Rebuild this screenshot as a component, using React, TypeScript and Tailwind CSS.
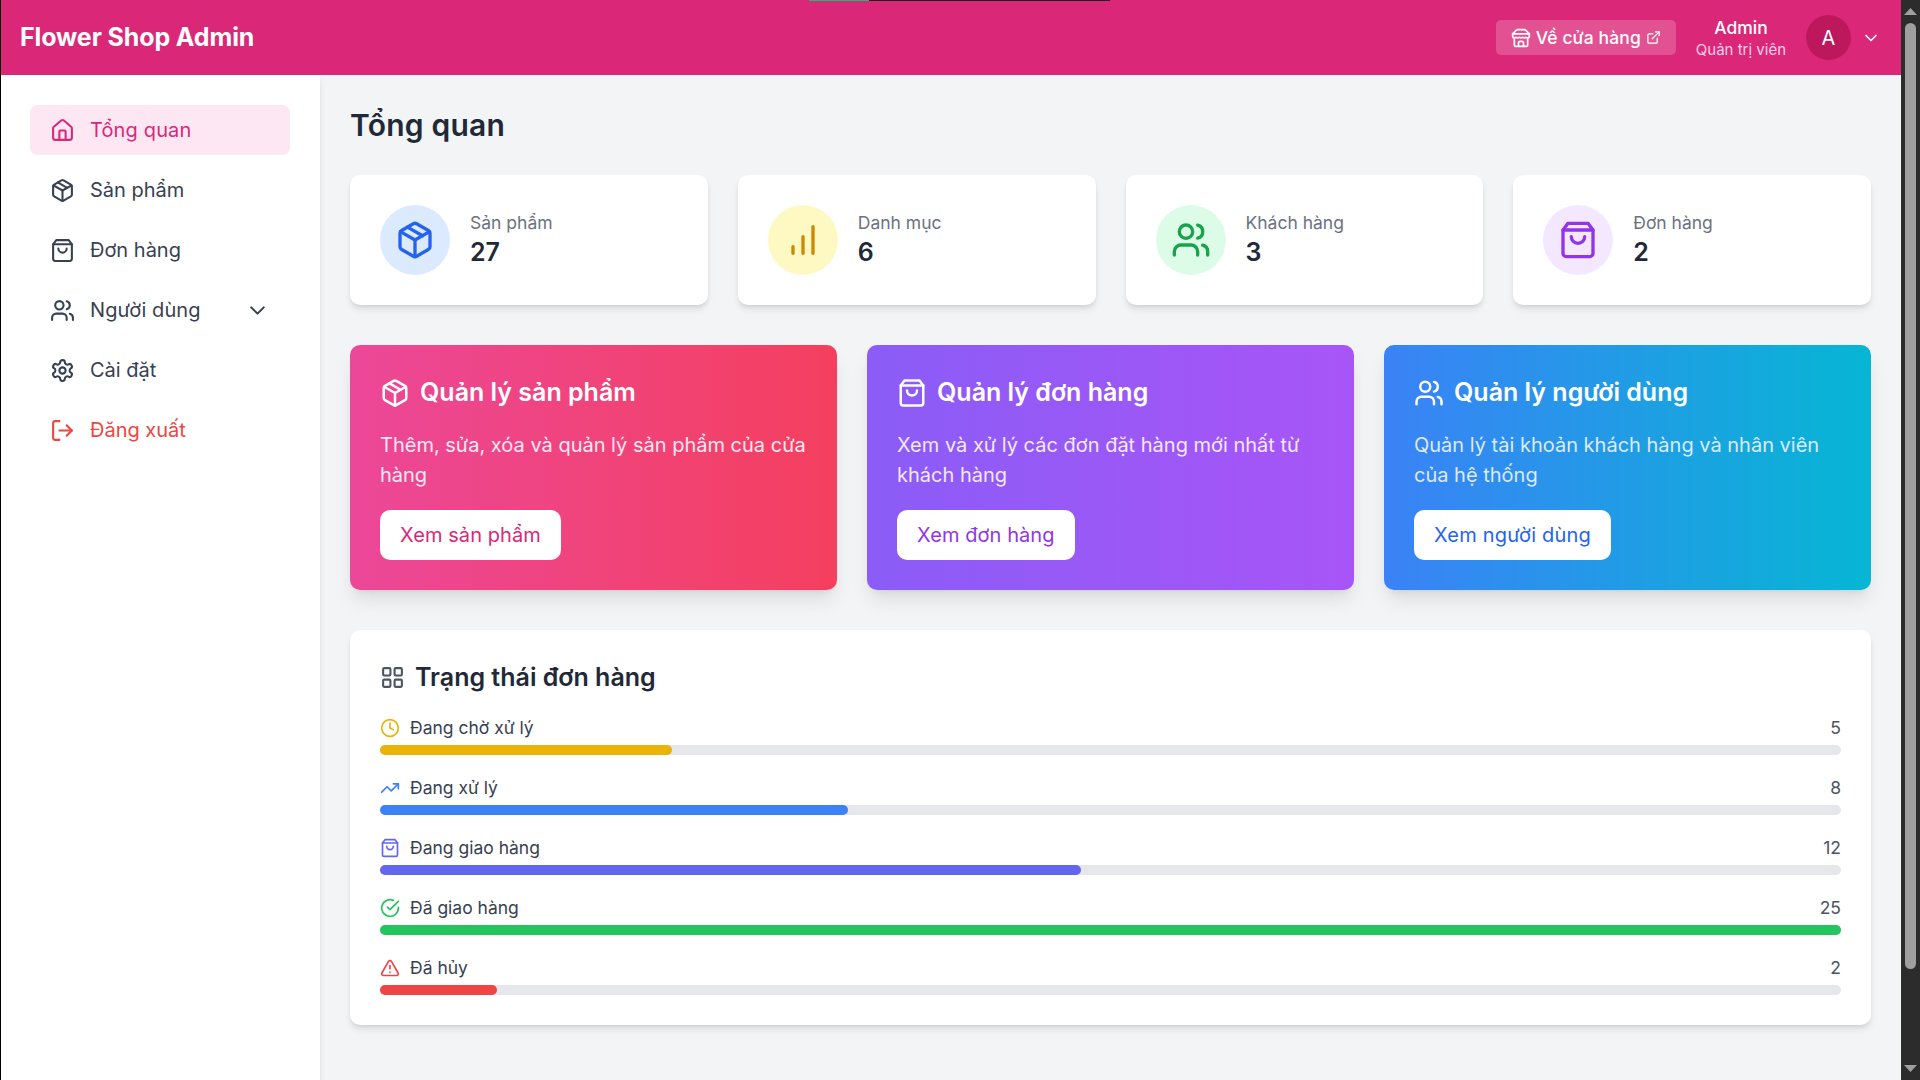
import type { ReactNode } from "react";

type IconProps = { className?: string };

function Icon({ className = "", children }: IconProps & { children: ReactNode }) {
  return (
    <svg
      viewBox="0 0 24 24"
      fill="none"
      stroke="currentColor"
      strokeWidth={2}
      strokeLinecap="round"
      strokeLinejoin="round"
      className={`shrink-0 ${className}`}
    >
      {children}
    </svg>
  );
}

const HomeIcon = (p: IconProps) => (
  <Icon {...p}>
    <path d="M15 21v-8a1 1 0 0 0-1-1h-4a1 1 0 0 0-1 1v8" />
    <path d="M3 10a2 2 0 0 1 .709-1.528l7-5.999a2 2 0 0 1 2.582 0l7 5.999A2 2 0 0 1 21 10v9a2 2 0 0 1-2 2H5a2 2 0 0 1-2-2z" />
  </Icon>
);

const PackageIcon = (p: IconProps) => (
  <Icon {...p}>
    <path d="m7.5 4.27 9 5.15" />
    <path d="M21 8a2 2 0 0 0-1-1.73l-7-4a2 2 0 0 0-2 0l-7 4A2 2 0 0 0 3 8v8a2 2 0 0 0 1 1.73l7 4a2 2 0 0 0 2 0l7-4A2 2 0 0 0 21 16Z" />
    <path d="m3.3 7 8.7 5 8.7-5" />
    <path d="M12 22V12" />
  </Icon>
);

const BagIcon = (p: IconProps) => (
  <Icon {...p}>
    <path d="M6 2 3 6v14a2 2 0 0 0 2 2h14a2 2 0 0 0 2-2V6l-3-4Z" />
    <path d="M3 6h18" />
    <path d="M16 10a4 4 0 0 1-8 0" />
  </Icon>
);

const UsersIcon = (p: IconProps) => (
  <Icon {...p}>
    <path d="M16 21v-2a4 4 0 0 0-4-4H6a4 4 0 0 0-4 4v2" />
    <circle cx="9" cy="7" r="4" />
    <path d="M22 21v-2a4 4 0 0 0-3-3.87" />
    <path d="M16 3.13a4 4 0 0 1 0 7.75" />
  </Icon>
);

const SettingsIcon = (p: IconProps) => (
  <Icon {...p}>
    <path d="M12.22 2h-.44a2 2 0 0 0-2 2v.18a2 2 0 0 1-1 1.73l-.43.25a2 2 0 0 1-2 0l-.15-.08a2 2 0 0 0-2.73.73l-.22.38a2 2 0 0 0 .73 2.73l.15.1a2 2 0 0 1 1 1.72v.51a2 2 0 0 1-1 1.74l-.15.09a2 2 0 0 0-.73 2.73l.22.38a2 2 0 0 0 2.73.73l.15-.08a2 2 0 0 1 2 0l.43.25a2 2 0 0 1 1 1.73V20a2 2 0 0 0 2 2h.44a2 2 0 0 0 2-2v-.18a2 2 0 0 1 1-1.73l.43-.25a2 2 0 0 1 2 0l.15.08a2 2 0 0 0 2.73-.73l.22-.39a2 2 0 0 0-.73-2.73l-.15-.08a2 2 0 0 1-1-1.74v-.5a2 2 0 0 1 1-1.74l.15-.09a2 2 0 0 0 .73-2.73l-.22-.38a2 2 0 0 0-2.73-.73l-.15.08a2 2 0 0 1-2 0l-.43-.25a2 2 0 0 1-1-1.73V4a2 2 0 0 0-2-2z" />
    <circle cx="12" cy="12" r="3" />
  </Icon>
);

const LogoutIcon = (p: IconProps) => (
  <Icon {...p}>
    <path d="M9 21H5a2 2 0 0 1-2-2V5a2 2 0 0 1 2-2h4" />
    <path d="m16 17 5-5-5-5" />
    <path d="M21 12H9" />
  </Icon>
);

const ChevronIcon = (p: IconProps) => (
  <Icon {...p}>
    <path d="m6 9 6 6 6-6" />
  </Icon>
);

const StoreIcon = (p: IconProps) => (
  <Icon {...p}>
    <path d="m2 7 4.41-4.41A2 2 0 0 1 7.83 2h8.34a2 2 0 0 1 1.42.59L22 7" />
    <path d="M4 12v8a2 2 0 0 0 2 2h12a2 2 0 0 0 2-2v-8" />
    <path d="M15 22v-4a2 2 0 0 0-2-2h-2a2 2 0 0 0-2 2v4" />
    <path d="M2 7h20" />
    <path d="M22 7v3a2 2 0 0 1-2 2a2.7 2.7 0 0 1-1.59-.63.7.7 0 0 0-.82 0A2.7 2.7 0 0 1 16 12a2.7 2.7 0 0 1-1.59-.63.7.7 0 0 0-.82 0A2.7 2.7 0 0 1 12 12a2.7 2.7 0 0 1-1.59-.63.7.7 0 0 0-.82 0A2.7 2.7 0 0 1 8 12a2.7 2.7 0 0 1-1.59-.63.7.7 0 0 0-.82 0A2.7 2.7 0 0 1 4 12a2 2 0 0 1-2-2V7" />
  </Icon>
);

const ExternalIcon = (p: IconProps) => (
  <Icon {...p}>
    <path d="M15 3h6v6" />
    <path d="M10 14 21 3" />
    <path d="M18 13v6a2 2 0 0 1-2 2H5a2 2 0 0 1-2-2V8a2 2 0 0 1 2-2h6" />
  </Icon>
);

const ChartIcon = (p: IconProps) => (
  <Icon {...p}>
    <path d="M12 20V10" />
    <path d="M18 20V4" />
    <path d="M6 20v-4" />
  </Icon>
);

const GridIcon = (p: IconProps) => (
  <Icon {...p}>
    <rect width="7" height="7" x="3" y="3" rx="1" />
    <rect width="7" height="7" x="14" y="3" rx="1" />
    <rect width="7" height="7" x="14" y="14" rx="1" />
    <rect width="7" height="7" x="3" y="14" rx="1" />
  </Icon>
);

const ClockIcon = (p: IconProps) => (
  <Icon {...p}>
    <circle cx="12" cy="12" r="10" />
    <path d="M12 6v6l4 2" />
  </Icon>
);

const TrendIcon = (p: IconProps) => (
  <Icon {...p}>
    <path d="m22 7-8.5 8.5-5-5L2 17" />
    <path d="M16 7h6v6" />
  </Icon>
);

const CheckIcon = (p: IconProps) => (
  <Icon {...p}>
    <path d="M22 11.08V12a10 10 0 1 1-5.93-9.14" />
    <path d="m9 11 3 3L22 4" />
  </Icon>
);

const AlertIcon = (p: IconProps) => (
  <Icon {...p}>
    <path d="m21.73 18-8-14a2 2 0 0 0-3.48 0l-8 14A2 2 0 0 0 4 21h16a2 2 0 0 0 1.73-3Z" />
    <path d="M12 9v4" />
    <path d="M12 17h.01" />
  </Icon>
);

const navItems = [
  { label: "Tổng quan", icon: HomeIcon, tone: "bg-[#fce7f3] text-[#db2777] tracking-[0.14px]" },
  { label: "Sản phẩm", icon: PackageIcon, tone: "text-[#374151]" },
  { label: "Đơn hàng", icon: BagIcon, tone: "text-[#374151]" },
  { label: "Người dùng", icon: UsersIcon, tone: "text-[#374151] tracking-[0.1px]", expandable: true },
  { label: "Cài đặt", icon: SettingsIcon, tone: "text-[#374151]" },
  { label: "Đăng xuất", icon: LogoutIcon, tone: "text-[#ef4444]" },
];

const stats = [
  { label: "Sản phẩm", value: 27, icon: PackageIcon, tone: "bg-[#dbeafe] text-[#2563eb]" },
  { label: "Danh mục", value: 6, icon: ChartIcon, tone: "bg-[#fef9c3] text-[#ca8a04]" },
  { label: "Khách hàng", value: 3, icon: UsersIcon, tone: "bg-[#dcfce7] text-[#16a34a]" },
  { label: "Đơn hàng", value: 2, icon: BagIcon, tone: "bg-[#f3e8ff] text-[#9333ea]" },
];

const features = [
  {
    title: "Quản lý sản phẩm",
    text: "Thêm, sửa, xóa và quản lý sản phẩm của cửa hàng",
    action: "Xem sản phẩm",
    icon: PackageIcon,
    bg: "bg-[linear-gradient(to_right,#ec4899,#f43f5e)]",
    textTone: "text-[#fce7f3]",
    actionTone: "text-[#db2777] tracking-[0.08px]",
  },
  {
    title: "Quản lý đơn hàng",
    text: "Xem và xử lý các đơn đặt hàng mới nhất từ khách hàng",
    action: "Xem đơn hàng",
    icon: BagIcon,
    bg: "bg-[linear-gradient(to_right,#8b5cf6,#a855f7)]",
    textTone: "text-[#f3e8ff]",
    actionTone: "text-[#9333ea] tracking-[0.08px]",
  },
  {
    title: "Quản lý người dùng",
    text: "Quản lý tài khoản khách hàng và nhân viên của hệ thống",
    action: "Xem người dùng",
    icon: UsersIcon,
    bg: "bg-[linear-gradient(to_right,#3b82f6,#06b6d4)]",
    textTone: "text-[#dbeafe]",
    actionTone: "text-[#2563eb] tracking-[0.2px]",
  },
];

const statuses = [
  { label: "Đang chờ xử lý", count: 5, icon: ClockIcon, tone: "text-[#eab308]", bar: "bg-[#eab308]" },
  { label: "Đang xử lý", count: 8, icon: TrendIcon, tone: "text-[#3b82f6]", bar: "bg-[#3b82f6]" },
  { label: "Đang giao hàng", count: 12, icon: BagIcon, tone: "text-[#6366f1]", bar: "bg-[#6366f1]" },
  { label: "Đã giao hàng", count: 25, icon: CheckIcon, tone: "text-[#22c55e]", bar: "bg-[#22c55e]" },
  { label: "Đã hủy", count: 2, icon: AlertIcon, tone: "text-[#ef4444]", bar: "bg-[#ef4444]" },
];
const maxCount = 25;

function Header() {
  return (
    <header className="flex h-[75px] shrink-0 items-center justify-between bg-[#db2777] px-5 text-white">
      <h1 className="text-[25px] leading-[35px] font-bold tracking-[-0.12px]">Flower Shop Admin</h1>
      <div className="flex items-center gap-5">
        <a className="flex h-[35px] items-center gap-[5px] rounded-[5px] bg-white/20 px-[15px] text-[17.5px] leading-[25px] font-medium tracking-[0.1px]">
          <StoreIcon className="size-5" />
          <span>Về cửa hàng</span>
          <ExternalIcon className="size-[15px]" />
        </a>
        <div className="text-center">
          <p className="text-[17.5px] leading-[25px] font-[450]">Admin</p>
          <p className="text-[15px] leading-[20px] text-[#fbcfe8]">Quản trị viên</p>
        </div>
        <div className="flex items-center gap-2.5">
          <div className="flex size-[45px] items-center justify-center rounded-full bg-[#be185d] text-xl">
            A
          </div>
          <ChevronIcon className="size-5" />
        </div>
      </div>
    </header>
  );
}

function Sidebar() {
  return (
    <aside className="z-10 w-80 shrink-0 bg-white p-7.5 shadow-[0_5px_7.5px_-1.25px_rgba(0,0,0,0.1),0_2.5px_5px_-2.5px_rgba(0,0,0,0.1)]">
      <nav className="flex flex-col gap-2.5">
        {navItems.map(({ label, icon: NavIcon, tone, expandable }) => (
          <a key={label} className={`flex h-12.5 items-center gap-[15px] rounded-[7.5px] px-5 text-xl ${tone}`}>
            <NavIcon className="size-[25px]" />
            <span className="flex-1">{label}</span>
            {expandable && <ChevronIcon className="size-[25px]" />}
          </a>
        ))}
      </nav>
    </aside>
  );
}

function Scrollbar() {
  return (
    <div className="flex w-[19px] shrink-0 flex-col items-center bg-[#2c2c2c] pt-2 pb-2 text-[#9f9f9f]">
      <svg viewBox="0 0 13 7" className="h-[7px] w-[13px] shrink-0" fill="currentColor">
        <path d="M6.5 0 13 7H0z" />
      </svg>
      <div className="mt-2 h-[946px] w-[11px] rounded-full bg-[#9f9f9f]" />
      <svg viewBox="0 0 13 7" className="mt-auto h-[7px] w-[13px] shrink-0" fill="currentColor">
        <path d="M0 0h13L6.5 7z" />
      </svg>
    </div>
  );
}

export default function App() {
  return (
    <div className="relative flex h-[1080px] w-[1920px] overflow-hidden bg-[#f3f4f6] font-['Inter',sans-serif]">
      <div className="flex min-w-0 flex-1 flex-col">
        <Header />
        <div className="flex min-h-0 flex-1">
          <Sidebar />
          <main className="min-w-0 flex-1 p-7.5">
            <h2 className="mb-7.5 text-[30px] leading-[40px] font-semibold tracking-[0.22px] text-[#1f2937]">
              Tổng quan
            </h2>

            <section className="mb-10 grid grid-cols-4 gap-7.5">
              {stats.map(({ label, value, icon: StatIcon, tone }) => (
                <div
                  key={label}
                  className="flex items-center gap-5 rounded-[10px] bg-white p-7.5 shadow-[0_5px_7.5px_-1.25px_rgba(0,0,0,0.1),0_2.5px_5px_-2.5px_rgba(0,0,0,0.1)]"
                >
                  <div className={`rounded-full p-[15px] ${tone}`}>
                    <StatIcon className="size-10" />
                  </div>
                  <div>
                    <p className="text-[17.5px] leading-[25px] text-[#6b7280]">{label}</p>
                    <p className="text-[25px] leading-[35px] font-semibold text-[#1f2937]">{value}</p>
                  </div>
                </div>
              ))}
            </section>

            <section className="mb-10 grid grid-cols-3 gap-7.5">
              {features.map(({ title, text, action, icon: FeatureIcon, bg, textTone, actionTone }) => (
                <div
                  key={title}
                  className={`rounded-[10px] p-7.5 shadow-[0_12.5px_18.75px_-3.75px_rgba(0,0,0,0.1),0_5px_7.5px_-5px_rgba(0,0,0,0.1)] ${bg}`}
                >
                  <div className="mb-5 flex items-center gap-2.5 text-white">
                    <FeatureIcon className="size-7.5" />
                    <h3 className="text-[25px] leading-[35px] font-semibold">{title}</h3>
                  </div>
                  <p className={`mb-5 text-xl leading-[30px] ${textTone}`}>{text}</p>
                  <button
                    className={`block h-12.5 rounded-[10px] bg-white px-5 text-xl leading-[30px] ${actionTone}`}
                  >
                    {action}
                  </button>
                </div>
              ))}
            </section>

            <section className="rounded-[10px] bg-white p-7.5 shadow-[0_5px_7.5px_-1.25px_rgba(0,0,0,0.1),0_2.5px_5px_-2.5px_rgba(0,0,0,0.1)]">
              <div className="mb-5 flex items-center gap-2.5">
                <GridIcon className="size-[25px] text-[#4b5563]" />
                <h3 className="text-[25px] leading-[35px] font-semibold text-[#1f2937]">Trạng thái đơn hàng</h3>
              </div>
              <div className="flex flex-col gap-5">
                {statuses.map(({ label, count, icon: StatusIcon, tone, bar }) => (
                  <div key={label}>
                    <div className="mb-[5px] flex items-center text-[17.5px] leading-[25px]">
                      <StatusIcon className={`mr-2.5 size-5 ${tone}`} />
                      <span className="flex-1 text-[#374151]">{label}</span>
                      <span className="text-[#4b5563]">{count}</span>
                    </div>
                    <div className="h-2.5 rounded-full bg-[#e5e7eb]">
                      <div
                        className={`h-2.5 rounded-full ${bar}`}
                        style={{ width: `${(count / maxCount) * 100}%` }}
                      />
                    </div>
                  </div>
                ))}
              </div>
            </section>
          </main>
        </div>
      </div>
      <Scrollbar />
      <div className="absolute inset-y-0 left-0 z-20 w-px bg-black" />
      <div className="absolute top-0 left-[809px] z-20 flex h-px w-[301px] bg-[#202020]">
        <div className="h-px w-[60px] bg-[#12c070]" />
      </div>
    </div>
  );
}
